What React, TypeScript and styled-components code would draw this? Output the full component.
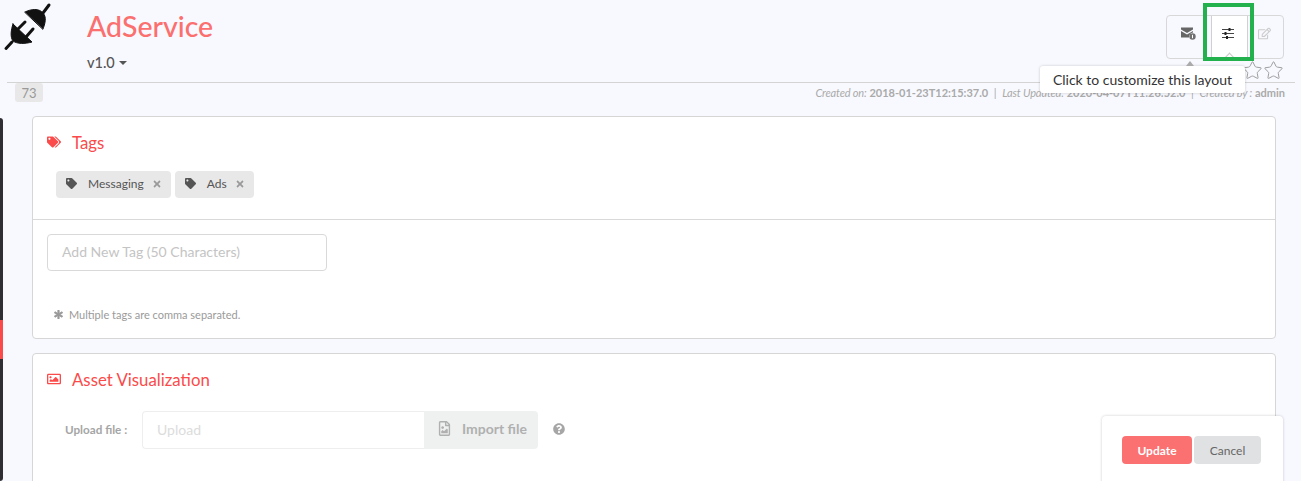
import React from "react";
import styled, { createGlobalStyle } from "styled-components";
import { FaTags, FaTag, FaTimes, FaAsterisk, FaRegImage, FaRegFileImage, FaQuestionCircle, FaRegEdit } from "react-icons/fa";
import { Star } from "lucide-react";

const GlobalStyle = createGlobalStyle`
    html, body {
        margin: 0;
        padding: 0;
        background: #f8f9fe;
        font-family: "Lato", "Liberation Sans", sans-serif;
        overflow: hidden;
    }
`

const Page = styled.div`
    position: relative;
    width: 1301px;
    height: 481px;
    overflow: hidden;
`

const Header = styled.header`
    display: flex;
    height: 82px;
    margin: 0 6px 0 7px;
    border-bottom: 1px solid #d4d4d4;
`

const Logo = styled.svg`
    width: 45px;
    height: 50px;
    margin-right: 35px;
    flex: none;
    overflow: visible;
`

const TitleBlock = styled.div`
    display: flex;
    flex-direction: column;
    flex: 1;
`

const Title = styled.h1`
    margin: 10px 0 0;
    font-size: 28.5px;
    line-height: 32px;
    font-weight: 500;
    color: #fb6f6f;
`

const Version = styled.div`
    display: flex;
    align-items: center;
    gap: 4px;
    margin-top: 12px;
    font-size: 14.5px;
    line-height: 18px;
    font-weight: 500;
    color: #555;
    &::after {
        content: "";
        border-top: 4px solid #555;
        border-left: 4px solid transparent;
        border-right: 4px solid transparent;
    }
`

const ActionsColumn = styled.div`
    display: flex;
    flex-direction: column;
    align-items: flex-end;
    margin-right: 11px;
    padding-top: 15px;
`

const ButtonGroup = styled.div`
    display: flex;
    height: 44px;
    box-sizing: border-box;
    border: 1px solid #d8d8d8;
    border-radius: 4px;
`

const ActionButton = styled.div<{ $active?: boolean; $width: number }>`
    display: flex;
    align-items: center;
    justify-content: center;
    width: ${p => p.$width}px;
    padding: 0 ${p => (p.$active ? 3 : 2)}px 8px 0;
    box-sizing: border-box;
    background: ${p => (p.$active ? "#fff" : "transparent")};
    border-left: ${p => (p.$active ? "1px solid #d0d0d0" : "none")};
    border-right: ${p => (p.$active ? "1px solid #d0d0d0" : "none")};
`

const Stars = styled.div`
    display: flex;
    margin-top: 1px;
    margin-right: 0;
    color: #9a9a9a;
`

const Highlight = styled.div`
    position: absolute;
    left: 1203px;
    top: 3px;
    width: 51px;
    height: 58px;
    box-sizing: border-box;
    border: 4px solid #22b14c;
`

const HollowArrow = styled.div`
    position: absolute;
    left: 1226px;
    top: 54px;
    width: 7px;
    height: 7px;
    box-sizing: border-box;
    background: #fff;
    border-top: 1px solid #c8c8c8;
    border-left: 1px solid #c8c8c8;
    transform: rotate(45deg);
`

const Tooltip = styled.div`
    position: absolute;
    left: 1040px;
    top: 66px;
    width: 205px;
    height: 27px;
    box-sizing: border-box;
    display: flex;
    align-items: center;
    justify-content: center;
    background: #fff;
    border-radius: 3px;
    box-shadow: 0 0 3px rgba(0, 0, 0, 0.2);
    font-size: 14px;
    color: #333;
    &::before {
        content: "";
        position: absolute;
        left: 146px;
        top: -5px;
        border-bottom: 5px solid #aaa;
        border-left: 4px solid transparent;
        border-right: 4px solid transparent;
    }
`

const MetaRow = styled.div`
    display: flex;
    justify-content: space-between;
    align-items: flex-start;
    height: 33px;
    padding: 0 16px 0 15px;
`

const Badge = styled.span`
    width: 28px;
    height: 19px;
    display: flex;
    align-items: center;
    justify-content: center;
    background: #e8e8e8;
    border-radius: 3px;
    font-size: 13px;
    color: #999;
`

const Meta = styled.div`
    margin-top: 3px;
    font-size: 11px;
    line-height: 14px;
    color: #aaa;
    white-space: pre;
    & em { font-style: italic; letter-spacing: -0.17px; }
    & b { font-weight: 700; }
`

const Content = styled.main`
    display: flex;
    flex-direction: column;
    gap: 14px;
    margin: 0 25px 0 32px;
`

const Card = styled.section`
    background: #fff;
    border: 1px solid #d6d6d6;
    border-radius: 4px;
    box-sizing: border-box;
`

const CardTitle = styled.h2`
    display: flex;
    align-items: center;
    gap: 11px;
    margin: 0;
    padding-left: 14px;
    height: 20px;
    font-size: 16.8px;
    font-weight: 400;
    color: #fb4a4a;
    & svg { font-size: 14px; width: 14px; }
`

const TagsTop = styled.div`
    padding-top: 15px;
    height: 103px;
    box-sizing: border-box;
    border-bottom: 1px solid #d9d9d9;
`

const TagList = styled.div`
    display: flex;
    gap: 4px;
    margin: 19px 0 0 23px;
`

const Tag = styled.span`
    display: flex;
    align-items: center;
    height: 27px;
    padding: 0 9px 2px 10px;
    box-sizing: border-box;
    background: #e8e8e8;
    border-radius: 4px;
    font-size: 12px;
    color: #555;
    & > svg:first-child { font-size: 11px; color: #555; margin-right: 11px; }
    & > svg:last-child { font-size: 10px; color: #999; margin-left: 8px; }
`

const TagsBottom = styled.div`
    padding: 14px 14px 0;
    height: 118px;
    box-sizing: border-box;
`

const TagInput = styled.div`
    width: 280px;
    height: 37px;
    box-sizing: border-box;
    padding: 0 0 2px 14px;
    display: flex;
    align-items: center;
    border: 1px solid #d9d9d9;
    border-radius: 4px;
    font-size: 14px;
    color: #c4c4c4;
`

const Note = styled.div`
    display: flex;
    align-items: center;
    gap: 6px;
    margin: 37px 0 0 7px;
    font-size: 11px;
    color: #9a9a9a;
    & svg { font-size: 9px; stroke: currentColor; stroke-width: 40px; }
`

const AssetCard = styled(Card)`
    height: 140px;
    padding-top: 15px;
`

const UploadRow = styled.div`
    display: flex;
    align-items: center;
    margin: 22px 0 0 32px;
`

const UploadLabel = styled.label`
    width: 77px;
    margin-bottom: 2px;
    font-size: 11.7px;
    font-weight: 700;
    color: #a5a5a5;
`

const UploadInput = styled.div`
    width: 282px;
    height: 38px;
    box-sizing: border-box;
    padding: 0 0 2px 14px;
    display: flex;
    align-items: center;
    border: 1px solid #eee;
    border-right: none;
    border-radius: 4px 0 0 4px;
    font-size: 14px;
    color: #dcdcdc;
`

const ImportButton = styled.div`
    display: flex;
    align-items: center;
    gap: 10px;
    width: 114px;
    height: 38px;
    box-sizing: border-box;
    padding: 0 0 3px 13px;
    background: #eff0f0;
    border-radius: 0 4px 4px 0;
    font-size: 14px;
    font-weight: 700;
    color: #b0b0b0;
    & svg { font-size: 15px; }
`

const HelpIcon = styled(FaQuestionCircle)`
    margin: 0 0 2px 15px;
    font-size: 12px;
    color: #a6a6a6;
`

const SideStrip = styled.div`
    position: absolute;
    left: 0;
    top: 118px;
    bottom: 0;
    width: 3px;
    background: #2f2f33;
    border-radius: 0 3px 3px 0;
    &::after {
        content: "";
        position: absolute;
        left: 0;
        top: 202px;
        width: 3px;
        height: 39px;
        background: #fb4a4a;
    }
`

const FloatPanel = styled.div`
    position: absolute;
    left: 1102px;
    top: 416px;
    width: 181px;
    height: 80px;
    box-sizing: border-box;
    padding: 20px 0 0 20px;
    display: flex;
    gap: 2px;
    align-items: flex-start;
    background: #fff;
    border-radius: 4px;
    box-shadow: 0 0 3px rgba(0, 0, 0, 0.2);
`

const PanelButton = styled.div<{ $primary?: boolean }>`
    display: flex;
    align-items: center;
    justify-content: center;
    width: ${p => (p.$primary ? 70 : 67)}px;
    height: 28px;
    border-radius: 4px;
    font-size: 12px;
    font-weight: ${p => (p.$primary ? 700 : 400)};
    background: ${p => (p.$primary ? "#fb7070" : "#e0e1e2")};
    color: ${p => (p.$primary ? "#fff" : "#666")};
`

const PlugLogo = () => (
    <Logo viewBox="0 0 45 50">
        <g fill="#111" stroke="#111" strokeLinecap="round" strokeLinejoin="round">
            <path d="M18 12 C24 9 32 8 36 13 C40 17 38 24 36 29 Z" strokeWidth="1" />
            <path d="M36 13 L42 5" strokeWidth="3" fill="none" />
            <path d="M6 24 L25 42 C18 44 10 44 6 41 C3 37 4 30 6 24 Z" strokeWidth="1" />
            <path d="M5 42 L-1 48.5" strokeWidth="3" fill="none" />
            <path d="M10 30 L18 22 M19 37 L26 29" strokeWidth="3" fill="none" />
        </g>
    </Logo>
);

const MailIcon = () => (
    <svg width="16" height="15" viewBox="0 0 16 15">
        <path d="M1 1.5 H13 V3.5 L7 7 L1 3.5 Z" fill="#666" />
        <path d="M1 5 L7 8.5 L13 5 V6.5 A4.5 4.5 0 0 0 9 11.5 H1 Z" fill="#666" />
        <circle cx="12.5" cy="10.5" r="3.2" fill="#707070" />
        <rect x="12" y="8.8" width="1" height="3.4" fill="#fff" />
    </svg>
);

const SlidersIcon = () => (
    <svg width="12" height="11" viewBox="0 0 12 11">
        <path d="M0 1.5 H12 M0 5.5 H12 M0 9.5 H12" stroke="#444" strokeWidth="1" fill="none" />
        <rect x="6.5" y="0" width="2" height="3" fill="#222" />
        <rect x="2.5" y="4" width="2" height="3" fill="#222" />
        <rect x="4" y="8" width="2" height="3" fill="#222" />
    </svg>
);

const App = () => {
    return <Page>
        <GlobalStyle />
        <Header>
            <PlugLogo />
            <TitleBlock>
                <Title>AdService</Title>
                <Version>v1.0</Version>
            </TitleBlock>
            <ActionsColumn>
                <ButtonGroup>
                    <ActionButton $width={44}><MailIcon /></ActionButton>
                    <ActionButton $width={37} $active><SlidersIcon /></ActionButton>
                    <ActionButton $width={35}><FaRegEdit color="#ccc" size={13} /></ActionButton>
                </ButtonGroup>
                <Stars><Star size={21} strokeWidth={1.1} /><Star size={21} strokeWidth={1.1} /></Stars>
            </ActionsColumn>
        </Header>
        <MetaRow>
            <Badge>73</Badge>
            <Meta><em>Created on:</em> <b>2018-01-23T12:15:37.0</b>  |  <em>Last Updated:</em> <b>2020-04-07T11:26:52.0</b>  |  <em>Created by :</em> <b>admin</b></Meta>
        </MetaRow>
        <Content>
            <Card>
                <TagsTop>
                    <CardTitle><FaTags />Tags</CardTitle>
                    <TagList>
                        <Tag><FaTag />Messaging<FaTimes /></Tag>
                        <Tag><FaTag />Ads<FaTimes /></Tag>
                    </TagList>
                </TagsTop>
                <TagsBottom>
                    <TagInput>Add New Tag (50 Characters)</TagInput>
                    <Note><FaAsterisk />Multiple tags are comma separated.</Note>
                </TagsBottom>
            </Card>
            <AssetCard>
                <CardTitle><FaRegImage />Asset Visualization</CardTitle>
                <UploadRow>
                    <UploadLabel>Upload file :</UploadLabel>
                    <UploadInput>Upload</UploadInput>
                    <ImportButton><FaRegFileImage />Import file</ImportButton>
                    <HelpIcon />
                </UploadRow>
            </AssetCard>
        </Content>
        <SideStrip />
        <HollowArrow />
        <Highlight />
        <Tooltip>Click to customize this layout</Tooltip>
        <FloatPanel>
            <PanelButton $primary>Update</PanelButton>
            <PanelButton>Cancel</PanelButton>
        </FloatPanel>
    </Page>
}

export default App;
